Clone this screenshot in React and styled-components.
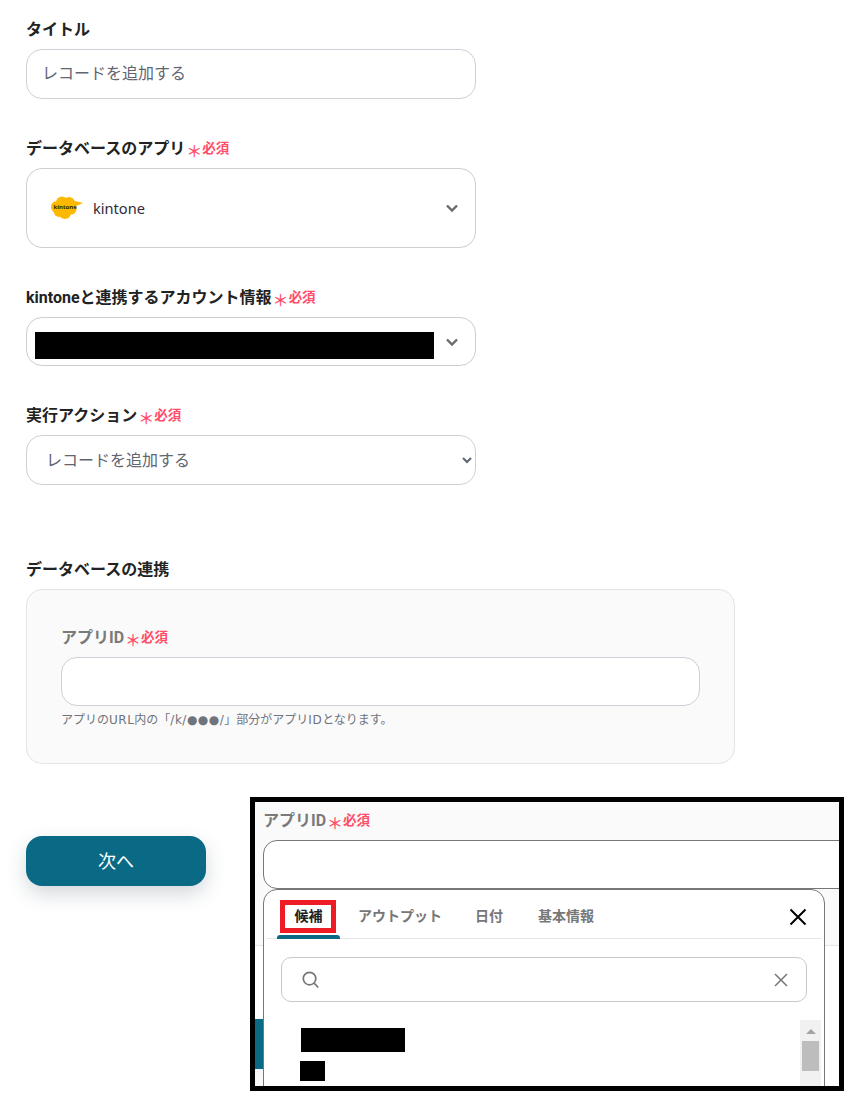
import React from 'react'
import styled, { createGlobalStyle } from 'styled-components'

const GlobalStyle = createGlobalStyle`
  html, body {
    margin: 0;
    padding: 0;
    background: #fff;
  }
  body {
    font-family: Roboto, "Noto Sans CJK JP", "Noto Sans", sans-serif;
    color: #222;
  }
`

const Page = styled.div`
  position: relative;
  width: 867px;
  height: 1112px;
  box-sizing: border-box;
  padding: 19px 0 0 26px;
  overflow: hidden;
`

const Field = styled.div`
  width: 450px;
  margin-bottom: ${props => props.$gap || 39}px;
`

const Label = styled.div`
  display: flex;
  align-items: center;
  height: 20px;
  box-sizing: border-box;
  padding-bottom: 2px;
  margin-bottom: 10px;
  font-size: 16px;
  font-weight: 700;
  white-space: nowrap;
  color: ${props => props.$muted ? '#7a7a7a' : '#222'};
`

const Mark = styled.span`
  margin-left: 1px;
  font-family: "Noto Sans CJK JP", sans-serif;
  font-size: 16px;
  font-weight: 500;
  line-height: 20px;
  position: relative;
  top: 3px;
  color: #ff4d68;
`

const Required = styled.span`
  font-size: 13.5px;
  font-weight: 700;
  color: #ff4d68;
`

const TextInput = styled.input`
  display: block;
  width: 100%;
  height: ${props => props.$height || 50}px;
  box-sizing: border-box;
  padding: 0 15px 4px;
  border: 1px solid #ced0d8;
  border-radius: 16px;
  background: #fff;
  outline: none;
  font-family: inherit;
  font-size: 16px;
  color: #5f6670;
`

const SelectBox = styled.div`
  display: flex;
  align-items: center;
  height: ${props => props.$height}px;
  box-sizing: border-box;
  padding: 0 16px 0 ${props => props.$left}px;
  border: 1px solid #cdcdd2;
  border-radius: 16px;
  background: #fff;
`

const AppName = styled.span`
  margin-left: 10px;
  font-family: "Noto Sans", sans-serif;
  font-size: 14.6px;
  color: #2b2b3b;
`

const Redacted = styled.div`
  width: ${props => props.$width}px;
  height: ${props => props.$height}px;
  margin-top: ${props => props.$drop || 0}px;
  margin-left: ${props => props.$indent || 0}px;
  background: #000;
`

const Chevron = styled.svg`
  width: 14px;
  height: 14px;
  margin-left: auto;
  flex: none;
`

const NativeSelect = styled.select`
  display: block;
  width: 100%;
  height: 50px;
  box-sizing: border-box;
  padding: 0 8px 0 15px;
  border: 1px solid #ced0d8;
  border-radius: 16px;
  background: #fff;
  outline: none;
  font-family: inherit;
  font-size: 16px;
  color: #5f6670;
`

const Panel = styled.div`
  width: 709px;
  height: 175px;
  box-sizing: border-box;
  padding: 37px 34px 0;
  border: 1px solid #e4e4e6;
  border-radius: 16px;
  background: #fafafa;
`

const Hint = styled.div`
  margin-top: 5px;
  font-family: "DejaVu Sans", "Noto Sans CJK JP", sans-serif;
  font-size: 12px;
  line-height: 18px;
  white-space: nowrap;
  color: #6f737a;
`

const HintLatin = styled.span`
  letter-spacing: 0.5px;
`

const NextButton = styled.button`
  display: block;
  width: 180px;
  height: 50px;
  padding: 0 0 2px;
  margin-top: 72px;
  border: 0;
  border-radius: 16px;
  background: #0a6a85;
  box-shadow: 0 8px 20px rgba(40, 60, 80, 0.2);
  font-family: inherit;
  font-size: 18px;
  color: #fff;
`

/* pasted capture of the open dropdown, sits over the page */
const Capture = styled.div`
  position: absolute;
  left: 250px;
  top: 797px;
  width: 594px;
  height: 294px;
  box-sizing: border-box;
  border: 5px solid #000;
  background: #fff;
  overflow: hidden;
`

const CaptureTop = styled.div`
  height: 144px;
  box-sizing: border-box;
  padding: 8px 0 0 8px;
  border-bottom: 1px solid #e4e4e6;
  background: #fafafa;
`

const CaptureInput = styled.div`
  height: 49px;
  margin-right: -20px;
  box-sizing: border-box;
  border: 1px solid #777;
  border-radius: 14px;
  background: #fff;
`

const ButtonPiece = styled.div`
  position: absolute;
  left: 0;
  top: 217px;
  width: 8px;
  height: 50px;
  background: #0a6a85;
  box-shadow: 0 8px 20px rgba(40, 60, 80, 0.2);
`

const Dropdown = styled.div`
  position: absolute;
  left: 8px;
  top: 87px;
  width: 562px;
  height: 240px;
  box-sizing: border-box;
  padding: 0 3px;
  border: 1px solid #777;
  border-radius: 14px;
  background: #fff;
`

const TabBar = styled.div`
  display: flex;
  align-items: center;
  height: 48px;
  padding-left: 10px;
  border-bottom: 1px solid #e4e4e6;
  position: relative;
`

const Tab = styled.div`
  position: relative;
  width: ${props => props.$width}px;
  margin-right: ${props => props.$gap}px;
  height: 48px;
  line-height: 53px;
  text-align: center;
  font-size: 14px;
  font-weight: 700;
  white-space: nowrap;
  color: ${props => props.$active ? '#222' : '#777'};
  &::after {
    content: ${props => props.$active ? '""' : 'none'};
    position: absolute;
    left: 0;
    right: 0;
    bottom: -1px;
    height: 4px;
    border-radius: 3px 3px 0 0;
    background: #0a6a85;
  }
`

const Highlight = styled.div`
  position: absolute;
  left: 3px;
  right: 4px;
  top: 10px;
  height: 33px;
  box-sizing: border-box;
  border: 5px solid #ee1c25;
`

const CloseIcon = styled.svg`
  position: absolute;
  right: 14px;
  top: 18px;
  width: 18px;
  height: 18px;
`

const SearchBox = styled.div`
  display: flex;
  align-items: center;
  justify-content: space-between;
  height: 45px;
  margin: 18px 14px 0 14px;
  box-sizing: border-box;
  padding: 0 18px 0 19px;
  border: 1px solid #c9c9c9;
  border-radius: 10px;
`

const ListArea = styled.div`
  position: relative;
  height: 90px;
  margin-top: 18px;
  padding: 8px 0 0 33px;
`

const ListGap = styled.div`
  height: 9px;
`

const Scrollbar = styled.div`
  position: absolute;
  right: 0;
  top: 0;
  width: 21px;
  height: 90px;
  background: #f1f1f1;
`

const ScrollArrow = styled.div`
  width: 0;
  height: 0;
  margin: 9px auto 0;
  border-left: 5px solid transparent;
  border-right: 5px solid transparent;
  border-bottom: 5px solid #a3a3a3;
`

const ScrollThumb = styled.div`
  width: 17px;
  height: 30px;
  margin: 7px auto 0;
  background: #bdbdbd;
`

const ChevronIcon = () => (
  <Chevron viewBox="0 0 14 14" fill="none" stroke="#6b6b6b" strokeWidth="2.4">
    <path d="M2 4.5l5 5 5-5" />
  </Chevron>
)

const RequiredMark = () => (
  <>
    <Mark>＊</Mark>
    <Required>必須</Required>
  </>
)

const KintoneLogo = () => (
  <svg width="32" height="24" viewBox="0 0 32 24">
    <g fill="#fdb900">
      <circle cx="6" cy="11" r="6" />
      <circle cx="11" cy="6.500" r="6" />
      <circle cx="18" cy="7" r="6" />
      <circle cx="20" cy="13" r="5.500" />
      <circle cx="14" cy="17" r="6" />
      <circle cx="8" cy="16" r="5" />
      <path d="M20 4l12 3-9 4z" />
    </g>
    <text x="2.5" y="12.500" fontSize="6" fontWeight="700" fill="#2e2400" fontFamily="Noto Sans, sans-serif">kintone</text>
  </svg>
)

export default function App() {
  return (
    <Page>
      <GlobalStyle />

      <Field>
        <Label>タイトル</Label>
        <TextInput defaultValue="レコードを追加する" />
      </Field>

      <Field>
        <Label>データベースのアプリ<RequiredMark /></Label>
        <SelectBox $height={80} $left={24}>
          <KintoneLogo />
          <AppName>kintone</AppName>
          <ChevronIcon />
        </SelectBox>
      </Field>

      <Field>
        <Label>kintoneと連携するアカウント情報<RequiredMark /></Label>
        <SelectBox $height={49} $left={8}>
          <Redacted $width={399} $height={27} $drop={8} />
          <ChevronIcon />
        </SelectBox>
      </Field>

      <Field $gap={74}>
        <Label>実行アクション<RequiredMark /></Label>
        <NativeSelect defaultValue="add">
          <option value="add">レコードを追加する</option>
        </NativeSelect>
      </Field>

      <Label>データベースの連携</Label>
      <Panel>
        <Label $muted>アプリID<RequiredMark /></Label>
        <TextInput $height={49} />
        <Hint>
          アプリの<HintLatin>URL</HintLatin>内の「<HintLatin>/k/●●●/</HintLatin>」部分がアプリ<HintLatin>ID</HintLatin>となります。
        </Hint>
      </Panel>

      <NextButton>次へ</NextButton>

      <Capture>
        <CaptureTop>
          <Label $muted>アプリID<RequiredMark /></Label>
          <CaptureInput />
        </CaptureTop>
        <ButtonPiece />
        <Dropdown>
          <TabBar>
            <Tab $active $width={63} $gap={18}>
              候補
              <Highlight />
            </Tab>
            <Tab $width={81} $gap={36}>アウトプット</Tab>
            <Tab $width={27} $gap={36}>日付</Tab>
            <Tab $width={55} $gap={0}>基本情報</Tab>
            <CloseIcon viewBox="0 0 18 18" fill="none" stroke="#000" strokeWidth="2">
              <path d="M1.5 1.5l15 15M16.5 1.500l-15 15" />
            </CloseIcon>
          </TabBar>
          <SearchBox>
            <svg width="19" height="19" viewBox="0 0 20 20" fill="none" stroke="#777" strokeWidth="1.8">
              <circle cx="9" cy="9" r="6.6" />
              <path d="M13.8 13.8l4.4 4.6" />
            </svg>
            <svg width="14" height="14" viewBox="0 0 14 14" fill="none" stroke="#777" strokeWidth="1.5">
              <path d="M1 1l12 12M13 1L1 13" />
            </svg>
          </SearchBox>
          <ListArea>
            <Redacted $width={104} $height={24} $indent={1} />
            <ListGap />
            <Redacted $width={25} $height={20} />
            <Scrollbar>
              <ScrollArrow />
              <ScrollThumb />
            </Scrollbar>
          </ListArea>
        </Dropdown>
      </Capture>
    </Page>
  )
}
